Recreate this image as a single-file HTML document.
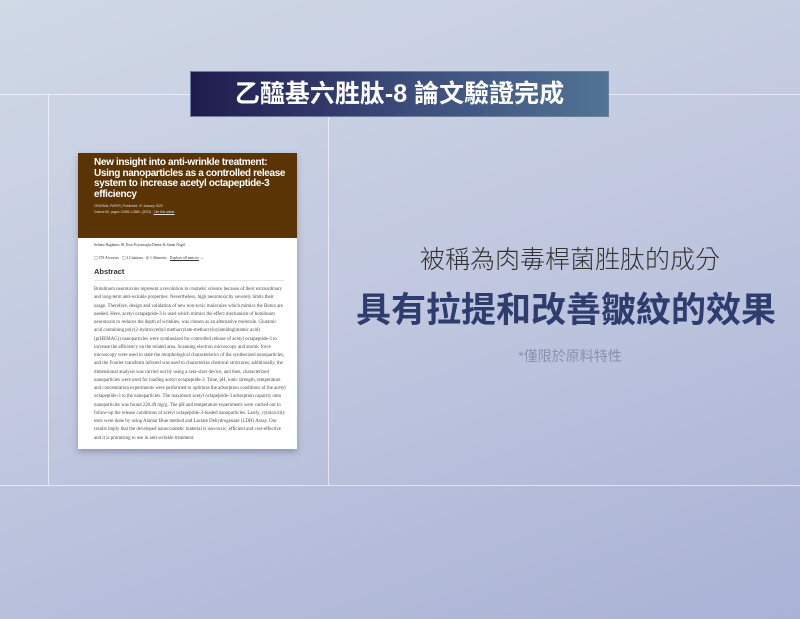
<!DOCTYPE html>
<html><head><meta charset="utf-8"><style>
*{margin:0;padding:0;box-sizing:border-box}
body{width:800px;height:619px;overflow:hidden;position:relative;background:linear-gradient(160deg,#d0d9e6 0%,#c2c9e0 45%,#aab2d6 100%);font-family:"Liberation Sans","Noto Sans CJK TC",sans-serif}
.l{position:absolute;background:rgba(255,255,255,0.6)}
.banner{position:absolute;left:190px;top:71px;width:419px;height:46px;background:linear-gradient(90deg,#201b4d,#3b4a7a 50%,#527494);border:1px solid #6a80a0;color:#fff;font-weight:bold;font-size:25px;text-align:center;line-height:45px}
.card{position:absolute;left:78px;top:153px;width:219px;height:296px;background:#fff;box-shadow:0 3px 6px rgba(60,60,90,.35)}
.hd{height:85px;background:#5b3405;padding:5px 10px 0 16px;color:#fff}
.hd h1{font-size:10px;line-height:10.5px;font-weight:bold;font-family:"Liberation Sans",sans-serif;letter-spacing:-0.35px;width:200px}
.hd p{font-size:3.2px;line-height:6px;color:#ddd;margin-top:3px}
.hd p+p{margin-top:0}
.bd{padding:3px 10px 0 16px;font-family:"Liberation Serif",serif;color:#444}
.sm{font-size:3.8px;line-height:9px;color:#333;margin-bottom:4px}
.ab{font-family:"Liberation Sans",sans-serif;font-weight:bold;font-size:7.5px;color:#333;border-bottom:1px solid #dde6ee;padding:0 0 4px;margin-bottom:5px;width:190px}
.tx{font-size:4.9px;line-height:8.25px;color:#4a4a4a;width:192px}
.t1{position:absolute;left:340px;width:460px;top:240px;text-align:center;font-size:25px;color:#333;font-weight:300}
.t2{position:absolute;left:336px;width:460px;top:282px;text-align:center;font-size:35px;font-weight:bold;color:#2f3d6e}
.t3{position:absolute;left:340px;width:460px;top:346px;text-align:center;font-size:14px;color:#8a90a8}
</style></head><body>
<div class="l" style="left:0;top:94px;width:800px;height:1px"></div>
<div class="l" style="left:0;top:485px;width:800px;height:1px"></div>
<div class="l" style="left:48px;top:94px;width:1px;height:391px"></div>
<div class="l" style="left:328px;top:117px;width:1px;height:368px"></div>
<div class="banner">乙醯基六胜肽-8 論文驗證完成</div>
<div class="card">
<div class="hd"><h1>New insight into anti-wrinkle treatment: Using nanoparticles as a controlled release system to increase acetyl octapeptide-3 efficiency</h1>
<p>ORIGINAL PAPER | Published: 07 January 2023</p><p>Volume 80, pages 12659–12680, (2023) &nbsp; <u>Cite this article</u></p></div>
<div class="bd">
<div class="sm" style="margin-top:0">Selami Baglamis ✉, Esra Poyrazoglu-Demir &amp; Sinan Nagil</div>
<div class="sm">▢ 378 Accesses &nbsp; ▢ 2 Citations &nbsp; ◎ 1 Altmetric &nbsp; <u>Explore all metrics</u> →</div>
<div class="ab">Abstract</div>
<div class="tx">Botulinum neurotoxins represent a revolution in cosmetic science because of their extraordinary and long-term anti-wrinkle properties. Nevertheless, high neurotoxicity severely limits their usage. Therefore, design and validation of new non-toxic molecules which mimics the Botox are needed. Here, acetyl octapeptide-3 is used which mimics the effect mechanism of botulinum neurotoxin to reduces the depth of wrinkles, was chosen as an alternative molecule. Glutamic acid containing poly(2-hydroxyethyl methacrylate-methacryloylamidoglutamic acid) (p(HEMAG)) nanoparticles were synthesized for controlled release of acetyl octapeptide-3 to increase the efficiency on the related area. Scanning electron microscopy and atomic force microscopy were used to state the morphological characteristics of the synthesized nanoparticles, and the Fourier transform infrared was used to characterize chemical structures; additionally, the dimensional analysis was carried out by using a zeta-sizer device, and then, characterized nanoparticles were used for loading acetyl octapeptide-3. Time, pH, ionic strength, temperature and concentration experiments were performed to optimize the adsorption conditions of the acetyl octapeptide-3 to the nanoparticles. The maximum acetyl octapeptide-3 adsorption capacity onto nanoparticles was found 220.49 mg/g. The pH and temperature experiments were carried out to follow-up the release conditions of acetyl octapeptide-3-loaded nanoparticles. Lastly, cytotoxicity tests were done by using Alamar Blue method and Lactate Dehydrogenase (LDH) Assay. Our results imply that the developed nanocosmetic material is non-toxic, efficient and cost-effective and it is promising to use in anti-wrinkle treatment.</div>
</div></div>
<div class="t1">被稱為肉毒桿菌胜肽的成分</div>
<div class="t2">具有拉提和改善皺紋的效果</div>
<div class="t3">*僅限於原料特性</div>
</body></html>
